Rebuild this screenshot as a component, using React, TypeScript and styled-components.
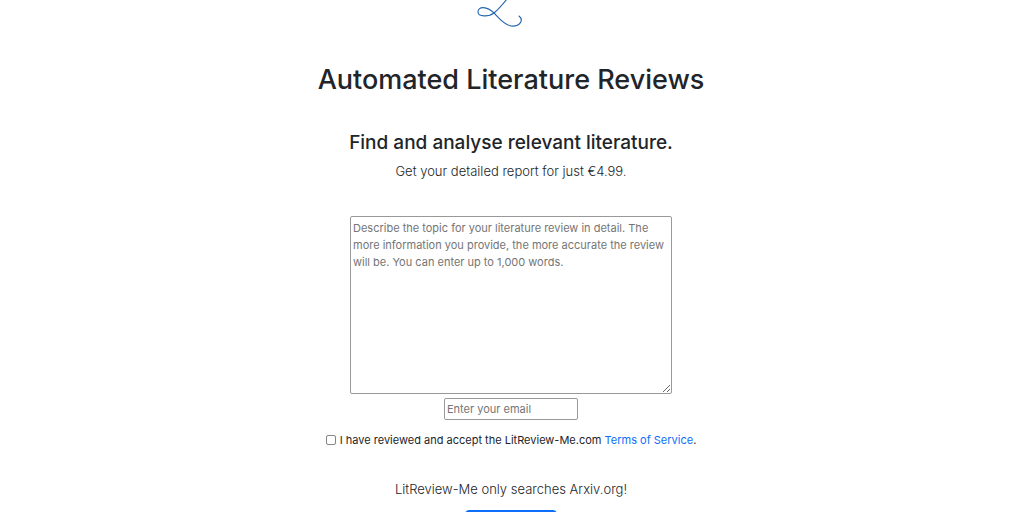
import React from 'react';
import styled, { createGlobalStyle } from 'styled-components';

const GlobalStyle = createGlobalStyle`
  *, *::before, *::after { box-sizing: border-box; }
  body {
    margin: 0;
    background: #fff;
    color: #212529;
    font-family: Inter, 'Liberation Sans', sans-serif;
    font-size: 11px;
    line-height: 18px;
  }
`;

const Page = styled.main`
  display: flex;
  flex-direction: column;
  align-items: center;
  height: 100vh;
  padding-right: 2px;
  overflow: hidden;
  text-align: center;
  & > * { flex-shrink: 0; }
`;

const Logo = styled.svg`
  display: block;
  width: 48px;
  height: 28px;
  margin-left: -24px;
`;

const Title = styled.h1`
  margin: 35px 0 0;
  font-size: 27px;
  line-height: 34px;
  font-weight: 500;
`;

const Subtitle = styled.h2`
  margin: 34px 0 0;
  font-size: 19px;
  line-height: 24px;
  font-weight: 500;
`;

const Lead = styled.p<{ $gap: number }>`
  margin: ${({ $gap }) => $gap}px 0 0;
  font-size: 13px;
  line-height: 22px;
  font-weight: 300;
`;

const Form = styled.form`
  display: flex;
  flex-direction: column;
  align-items: center;
  width: 100%;
  margin-top: 34px;
`;

const Topic = styled.textarea`
  width: 322px;
  max-width: 100%;
  height: 178px;
  padding: 3px 2px;
  border: 1px solid #999;
  border-radius: 2px;
  font: inherit;
  line-height: 17px;
  resize: both;
  &::placeholder { color: #757575; }
`;

const Email = styled.input`
  width: 134px;
  height: 22px;
  margin-top: 4px;
  padding: 1px 2px;
  border: 1px solid #999;
  border-radius: 2px;
  font: inherit;
  &::placeholder { color: #757575; }
`;

const Terms = styled.div`
  display: flex;
  align-items: center;
  gap: 4px;
  margin-top: 11px;
`;

const Checkbox = styled.input`
  appearance: none;
  width: 10px;
  height: 10px;
  margin: 0;
  border: 1px solid #858585;
  border-radius: 2px;
  background: #fff;
  &:checked { background: #0d6efd; }
`;

const TermsLink = styled.a`
  color: #0d6efd;
  text-decoration: none;
`;

const Submit = styled.button`
  width: 92px;
  height: 28px;
  margin-top: 10px;
  border: 1px solid #0d6efd;
  border-radius: 4px;
  background: #0d6efd;
`;

export default function App() {
  return (
    <>
      <GlobalStyle />
      <Page>
        <Logo viewBox="0 0 48 28" fill="none" stroke="#2465b0" strokeWidth="1.1" strokeLinecap="round" aria-hidden="true">
          <path d="M32 -1C28 4 24 9 19 13C14 17 3 17 3 12C3 6 12 6 19 13C24 18 28 24 36 26C45 27 49 20 44 16" />
        </Logo>
        <Title>Automated Literature Reviews</Title>
        <Subtitle>Find and analyse relevant literature.</Subtitle>
        <Lead $gap={5}>Get your detailed report for just €4.99.</Lead>
        <Form>
          <Topic
            aria-label="Topic"
            placeholder="Describe the topic for your literature review in detail. The more information you provide, the more accurate the review will be. You can enter up to 1,000 words."
          />
          <Email type="email" aria-label="Email" placeholder="Enter your email" />
          <Terms>
            <Checkbox type="checkbox" id="terms" />
            <label htmlFor="terms">
              I have reviewed and accept the LitReview-Me.com <TermsLink href="#terms">Terms of Service</TermsLink>.
            </label>
          </Terms>
          <Lead $gap={29}>LitReview-Me only searches Arxiv.org!</Lead>
          <Submit type="submit" aria-label="Submit" />
        </Form>
      </Page>
    </>
  );
}
